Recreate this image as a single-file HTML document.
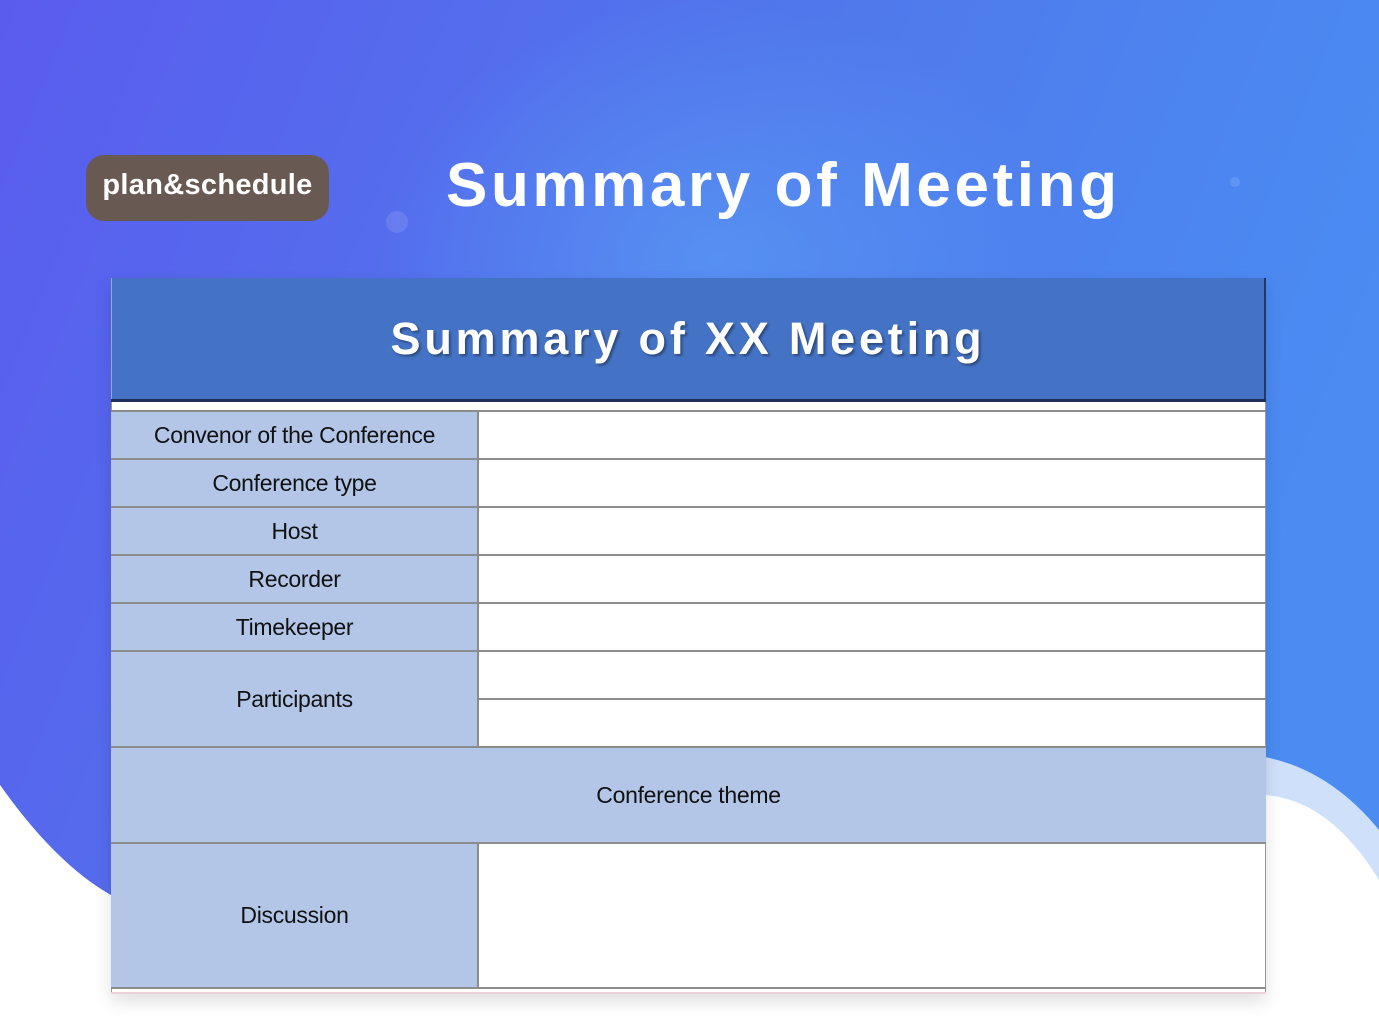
<!DOCTYPE html>
<html><head><meta charset="utf-8"><style>
*{margin:0;padding:0;box-sizing:border-box}
body{width:1379px;height:1033px;overflow:hidden;position:relative;font-family:"Liberation Sans",sans-serif;background:#fff}
.bg{position:absolute;left:0;top:0;width:1379px;height:1033px}
.pill{position:absolute;left:86px;top:155px;width:243px;height:66px;border-radius:18px;background:#685a52;color:#fff;font-size:29px;font-weight:bold;line-height:60px;text-align:center;letter-spacing:0.3px}
.title{position:absolute;left:446px;top:150px;color:#fff;font-size:62px;font-weight:bold;letter-spacing:3.6px}
.cell{position:absolute;display:flex;align-items:center;justify-content:center;font-size:23px;color:#111;letter-spacing:-0.3px}
.lab{background:#b4c6e7}
.hl{position:absolute;height:2px;background:#8c8c8c}
</style></head><body>
<svg class="bg" viewBox="0 0 1379 1033">
<defs><linearGradient id="g" x1="0" y1="0" x2="1" y2="0.3">
<stop offset="0" stop-color="#5a5cee"/><stop offset="0.55" stop-color="#5078ec"/><stop offset="1" stop-color="#4a8cf2"/></linearGradient>
<radialGradient id="r" cx="0.52" cy="0.25" r="0.25"><stop offset="0" stop-color="#5aa0f5" stop-opacity="0.6"/><stop offset="1" stop-color="#5aa0f5" stop-opacity="0"/></radialGradient></defs>
<rect width="1379" height="1033" fill="url(#g)"/>
<rect width="1379" height="1033" fill="url(#r)"/>
<path d="M0 785 Q60 870 120 900 L1265 900 L1265 757 Q1330 770 1379 830 L1379 1033 L0 1033 Z" fill="#cfe0fb"/>
<path d="M0 785 Q60 870 120 900 L1265 900 L1265 795 Q1330 800 1379 880 L1379 1033 L0 1033 Z" fill="#fff"/>
<circle cx="397" cy="222" r="11" fill="#7b8cf3" opacity="0.5"/>
<circle cx="1235" cy="182" r="5" fill="#6aa0f5" opacity="0.6"/>
</svg>
<div class="pill">plan&amp;schedule</div>
<div class="title">Summary of Meeting</div>
<div style="position:absolute;left:111px;top:278px;width:1155px;height:716px;box-shadow:0 8px 16px rgba(0,0,0,0.12);background:#fff"></div>
<div class="cell" style="left:111px;top:278px;width:1155px;height:122px;background:#4472c4;color:#fff;font-size:45px;font-weight:bold;letter-spacing:3.8px;text-shadow:2px 2px 2px rgba(0,0,0,0.35);border-right:2px solid #1f3864;border-left:1px solid #8fa8d8">Summary of XX Meeting</div>
<div style="position:absolute;left:111px;top:399px;width:1155px;height:3px;background:#1f2f5c"></div>
<div style="position:absolute;left:111px;top:402px;width:1155px;height:592px;background:#fff;border-left:1px solid #999;border-right:1px solid #999"></div>
<div class="cell lab" style="left:111px;top:411px;width:367px;height:48px">Convenor of the Conference</div>
<div class="cell lab" style="left:111px;top:459px;width:367px;height:48px">Conference type</div>
<div class="cell lab" style="left:111px;top:507px;width:367px;height:48px">Host</div>
<div class="cell lab" style="left:111px;top:555px;width:367px;height:48px">Recorder</div>
<div class="cell lab" style="left:111px;top:603px;width:367px;height:48px">Timekeeper</div>
<div class="cell lab" style="left:111px;top:651px;width:367px;height:96px">Participants</div>
<div class="cell lab" style="left:111px;top:747px;width:1155px;height:96px">Conference theme</div>
<div class="cell lab" style="left:111px;top:843px;width:367px;height:145px">Discussion</div>
<div style="position:absolute;left:477px;top:411px;width:2px;height:336px;background:#8c8c8c"></div>
<div style="position:absolute;left:477px;top:843px;width:2px;height:145px;background:#8c8c8c"></div>
<div class="hl" style="left:111px;top:410px;width:1155px"></div>
<div class="hl" style="left:111px;top:458px;width:1155px"></div>
<div class="hl" style="left:111px;top:506px;width:1155px"></div>
<div class="hl" style="left:111px;top:554px;width:1155px"></div>
<div class="hl" style="left:111px;top:602px;width:1155px"></div>
<div class="hl" style="left:111px;top:650px;width:1155px"></div>
<div class="hl" style="left:478px;top:698px;width:788px"></div>
<div class="hl" style="left:111px;top:746px;width:1155px"></div>
<div class="hl" style="left:111px;top:842px;width:1155px"></div>
<div class="hl" style="left:111px;top:987px;width:1155px"></div>
<div style="position:absolute;left:111px;top:992px;width:1155px;height:2px;background:#f0d0d8"></div>
</body></html>
